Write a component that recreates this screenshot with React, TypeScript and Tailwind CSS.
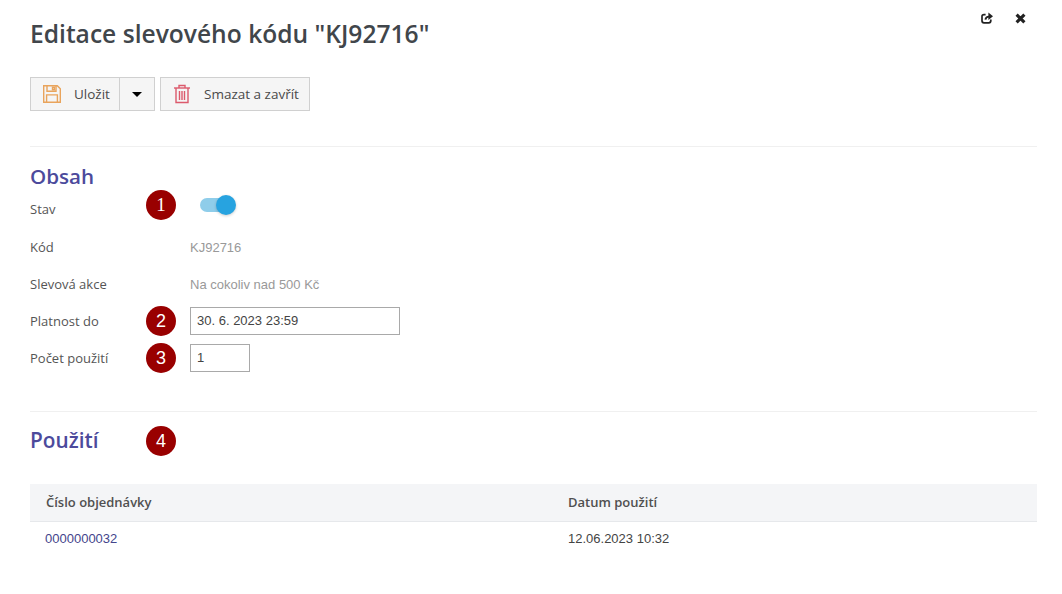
import React from "react";

const openSans = "font-['Open_Sans',sans-serif]";
const arial = "font-['Liberation_Sans',Arial,sans-serif]";

const Badge = ({ n }: { n: number }) => (
  <div className={`w-[30px] h-[30px] rounded-full bg-[#990000] text-white flex items-center justify-center ${n === 1 ? "text-[19px] font-['Liberation_Serif',serif]" : `text-[18px] ${arial}`}`}>
    {n}
  </div>
);

const SaveIcon = () => (
  <svg width="20" height="20" viewBox="0 0 20 20" fill="none" stroke="#e9a45c" strokeWidth="1.4">
    <path d="M1.7 1.7h13.6l3 3v13.6H1.7z" />
    <path d="M5 1.7v5.6h9V1.7" />
    <path d="M10.5 3.2h1.8v2.6h-1.8z" />
    <path d="M4.6 18.3v-7.4h10.8v7.4" />
  </svg>
);

const TrashIcon = () => (
  <svg width="18" height="20" viewBox="0 0 18 20" fill="none" stroke="#dc5a6c" strokeWidth="1.4">
    <path d="M1 4h16" />
    <path d="M6 4V1.5h6V4" />
    <path d="M3 4v14.5h12V4" />
    <path d="M6.5 7v9M9 7v9M11.5 7v9" />
  </svg>
);

const Row = ({ label, badge, children, className, labelClass }: { label: string; badge?: number; children?: React.ReactNode; className?: string; labelClass?: string }) => (
  <div className={`flex items-center ${className ?? ""}`}>
    <div className={`w-[116px] text-[13px] text-[#555] ${openSans} ${labelClass ?? ""}`}>{label}</div>
    <div className="w-[44px] flex">{badge && <Badge n={badge} />}</div>
    {children}
  </div>
);

export default function App() {
  return (
    <div className="relative w-[1062px] h-[594px] bg-white overflow-hidden px-[30px] pt-[16px]">
      {/* window actions */}
      <div className="absolute top-[12px] left-[981px] flex items-center gap-[22px]">
        <svg width="12" height="12" viewBox="0 0 12 12" fill="none" stroke="#222" strokeWidth="1.7">
          <path d="M9.8 7.6v1.2a2 2 0 0 1-2 2H3a2 2 0 0 1-2-2V4.6a2 2 0 0 1 2-2h1.6" />
          <path d="M4.4 7.6c.3-2 1.5-3 3.6-3" strokeWidth="1.9" />
          <path d="M7.4 0.6 12 4.3 7.4 8z" fill="#222" stroke="none" />
        </svg>
        <svg width="11" height="11" viewBox="0 0 11 11" stroke="#222" strokeWidth="3.1">
          <path d="M1.6 1.6l7.8 7.8M9.4 1.6l-7.8 7.8" />
        </svg>
      </div>

      <h1 className={`text-[24.6px] leading-[36px] font-semibold text-[#41464b] ${openSans}`}>Editace slevového kódu "KJ92716"</h1>

      {/* toolbar */}
      <div className={`flex mt-[25px] h-[34px] text-[13.5px] text-[#4a4a4a] ${openSans}`}>
        <div className="flex border border-[#d0d0d0] bg-[#f5f5f5]">
          <div className="flex items-center w-[88px] pl-[11px]">
            <SaveIcon />
            <span className="ml-[12px]">Uložit</span>
          </div>
          <div className="w-[35px] border-l border-[#d0d0d0] flex items-center justify-center">
            <div className="w-0 h-0 border-x-[5px] border-x-transparent border-t-[5px] border-t-black" />
          </div>
        </div>
        <div className="flex items-center ml-[5px] w-[150px] pl-[12px] border border-[#d0d0d0] bg-[#f5f5f5]">
          <TrashIcon />
          <span className="ml-[13px]">Smazat a zavřít</span>
        </div>
      </div>

      <div className="w-[1007px] border-t border-[#f0f0f0] mt-[35px]" />

      <h2 className={`mt-[16px] text-[20.6px] leading-[27px] font-semibold text-[#4c4a9c] ${openSans}`}>Obsah</h2>

      <Row label="Stav" badge={1} className="h-[30px]" labelClass="pt-[9px]">
        <div className="relative ml-[10px] w-[36px] h-[20px] flex items-center">
          <div className="w-[32px] h-[14px] rounded-full bg-[#8fcdea]" />
          <div className="absolute left-[16px] top-0 w-[20px] h-[20px] rounded-full bg-[#27a3e0] shadow-[0_1px_3px_rgba(0,0,0,0.2)]" />
        </div>
      </Row>
      <Row label="Kód" className="h-[30px] mt-[13px]">
        <span className={`text-[13px] text-[#999] ${arial}`}>KJ92716</span>
      </Row>
      <Row label="Slevová akce" className="h-[30px] mt-[7px]">
        <span className={`text-[13px] text-[#999] ${arial}`}>Na cokoliv nad 500 Kč</span>
      </Row>
      <Row label="Platnost do" badge={2} className="h-[30px] mt-[6px]" labelClass="pt-[2px]">
        <div className={`w-[210px] h-[28px] border border-[#a9a9a9] flex items-center pl-[6px] text-[13px] text-[#444] ${arial}`}>30. 6. 2023 23:59</div>
      </Row>
      <Row label="Počet použití" badge={3} className="h-[30px] mt-[7px]" labelClass="pt-[2px]">
        <div className={`w-[60px] h-[28px] border border-[#a9a9a9] flex items-center pl-[6px] text-[13px] text-[#444] ${arial}`}>1</div>
      </Row>

      <div className="w-[1007px] border-t border-[#f0f0f0] mt-[38px]" />

      <div className="flex items-center mt-[14px] h-[30px]">
        <h2 className={`w-[116px] text-[20.8px] font-semibold text-[#4c4a9c] ${openSans}`}>Použití</h2>
        <Badge n={4} />
      </div>

      {/* usage table */}
      <div className="w-[1007px] mt-[28px]">
        <div className={`flex items-center h-[38px] bg-[#f4f5f7] border-b border-[#e6e8eb] text-[13px] font-semibold text-[#505050] ${openSans}`}>
          <div className="w-[538px] pl-[16px]">Číslo objednávky</div>
          <div>Datum použití</div>
        </div>
        <div className={`flex items-center h-[34px] text-[13px] ${arial}`}>
          <div className="w-[538px] pl-[15px] text-[#44458c]">0000000032</div>
          <div className="text-[#444]">12.06.2023 10:32</div>
        </div>
      </div>
    </div>
  );
}
